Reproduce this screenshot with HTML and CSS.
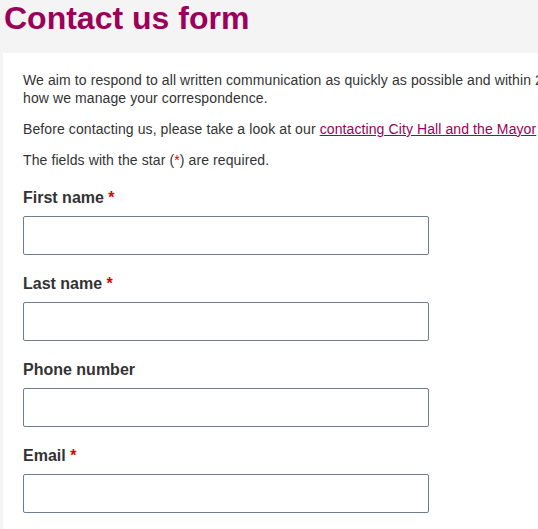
FILE: index.html
```html
<!DOCTYPE html>
<html lang="en">
<head>
<meta charset="utf-8">
<title>Contact us form</title>
<link rel="stylesheet" href="styles.css">
</head>
<body>
<h1 class="page-title">Contact us form</h1>
<main class="panel">
  <p class="intro">We aim to respond to all written communication as quickly as possible and within 20 working days. Read more about<br>how we manage your correspondence.</p>
  <p class="intro">Before contacting us, please take a look at our <a class="link" href="#">contacting City Hall and the Mayor</a> page.</p>
  <p class="intro">The fields with the star (<span class="req">*</span>) are required.</p>
  <form class="form">
    <div class="field">
      <label class="label" for="fn">First name <span class="req">*</span></label>
      <input class="input" id="fn" type="text">
    </div>
    <div class="field">
      <label class="label" for="ln">Last name <span class="req">*</span></label>
      <input class="input" id="ln" type="text">
    </div>
    <div class="field">
      <label class="label" for="ph">Phone number</label>
      <input class="input" id="ph" type="text">
    </div>
    <div class="field">
      <label class="label" for="em">Email <span class="req">*</span></label>
      <input class="input" id="em" type="text">
    </div>
  </form>
</main>
</body>
</html>
```
FILE: styles.css
```css
html, body {
  margin: 0;
  padding: 0;
  background: #f4f4f4;
  overflow: hidden;
}
body {
  font-family: "Liberation Sans", Arial, sans-serif;
  color: #333;
  width: 760px;
}
.page-title {
  margin: 0;
  padding: 0 0 0 4px;
  height: 53px;
  font-size: 32px;
  line-height: 36px;
  font-weight: bold;
  color: #9b005a;
}
.panel {
  margin-left: 3px;
  background: #fff;
  padding: 18px 20px 20px 20px;
}
.intro {
  margin: 0 0 13px 0;
  font-size: 14px;
  line-height: 18px;
  letter-spacing: 0.1px;
  white-space: nowrap;
}
.link {
  color: #9b005a;
  text-decoration: underline;
}
.req {
  color: #e00000;
}
.form {
  display: flex;
  flex-direction: column;
  gap: 19px;
  padding-top: 6px;
}
.field {
  display: flex;
  flex-direction: column;
  gap: 8px;
}
.label {
  font-size: 16px;
  line-height: 20px;
  font-weight: bold;
  color: #333;
}
.input {
  box-sizing: border-box;
  width: 406px;
  height: 39px;
  margin: 0;
  border: 1px solid #6e7d89;
  border-radius: 2px;
  background: #fff;
  font: 14px "Liberation Sans", Arial, sans-serif;
}
```
